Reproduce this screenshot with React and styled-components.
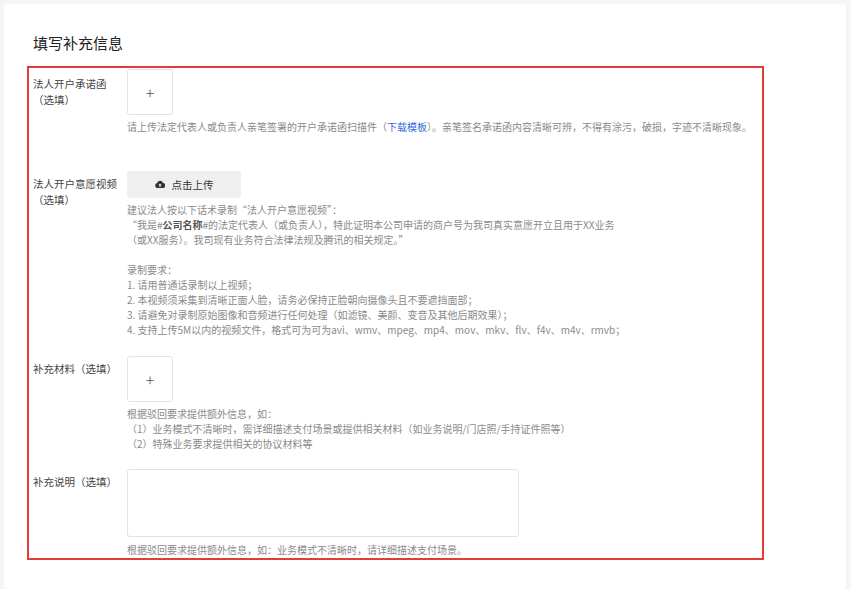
import styled, { createGlobalStyle } from 'styled-components';

const Global = createGlobalStyle`
  body { margin: 0; background: #f4f5f7; font-family: "Noto Sans CJK SC", "Liberation Sans", sans-serif; }
`;
const Card = styled.div`
  margin: 4px 5px 0 4px;
  height: 585px;
  background: #fff;
  border-radius: 4px;
  padding: 28px 0 0 23px;
  box-sizing: border-box;
`;
const Title = styled.h2`
  margin: 0 0 12px 6px;
  font-size: 15px;
  font-weight: 400;
  color: #222;
  line-height: 22px;
`;
const Frame = styled.div`
  width: 737px;
  height: 494px;
  box-sizing: border-box;
  border: 2px solid #e33b36;
  padding: 1px 0 0 4px;
`;
const Row = styled.div`
  display: flex;
  margin-bottom: ${(p) => p.gap || 0}px;
`;
const Label = styled.div`
  width: 94px;
  flex-shrink: 0;
  font-size: 10.5px;
  line-height: 16px;
  color: #444;
  white-space: nowrap;
  padding-top: ${(p) => p.top || 12}px;
`;
const Body = styled.div`
  flex: 1;
`;
const Box = styled.div`
  width: 44px;
  height: 44px;
  border: 1px solid #e3e3e3;
  border-radius: 3px;
  display: flex;
  align-items: center;
  justify-content: center;
  color: #555;
  font-size: 16px;
  font-weight: 300;
`;
const Btn = styled.div`
  width: 114px;
  height: 27px;
  background: #efefef;
  border-radius: 3px;
  display: flex;
  align-items: center;
  justify-content: center;
  gap: 7px;
  font-size: 10.5px;
  color: #333;
`;
const Hint = styled.div`
  margin-top: ${(p) => p.top || 6}px;
  font-size: 10px;
  line-height: 15px;
  color: #8a8a8a;
  white-space: nowrap;
  a { color: #2f6bd8; text-decoration: none; }
  b { color: #555; }
`;
const Area = styled.div`
  width: 390px;
  height: 66px;
  border: 1px solid #e3e3e3;
  border-radius: 3px;
`;

const Cloud = () => (
  <svg width="10" height="9" viewBox="0 0 20 16">
    <path d="M5 15a5 5 0 0 1-.6-9.9A6 6 0 0 1 16 5a5 5 0 0 1-.5 10z" fill="#333" />
    <path d="M10 6l-3.2 3.4H9V13h2V9.4h2.2z" fill="#fff" />
  </svg>
);

export default function App() {
  return (
    <>
      <Global />
      <Card>
        <Title>填写补充信息</Title>
        <Frame>
          <Row gap={37}>
            <Label top={7}>法人开户承诺函<br />（选填）</Label>
            <Body>
              <Box>+</Box>
              <Hint top={4}>
                请上传法定代表人或负责人亲笔签署的开户承诺函扫描件（<a href="#">下载模板</a>）。亲笔签名承诺函内容清晰可辨，不得有涂污，破损，字迹不清晰现象。
              </Hint>
            </Body>
          </Row>
          <Row gap={19}>
            <Label top={5}>法人开户意愿视频<br />（选填）</Label>
            <Body>
              <Btn><Cloud />点击上传</Btn>
              <Hint top={4}>
                建议法人按以下话术录制“法人开户意愿视频”：<br />
                “我是#<b>公司名称</b>#的法定代表人（或负责人），特此证明本公司申请的商户号为我司真实意愿开立且用于XX业务<br />
                （或XX服务）。我司现有业务符合法律法规及腾讯的相关规定。”<br />
                <br />
                录制要求：<br />
                1. 请用普通话录制以上视频；<br />
                2. 本视频须采集到清晰正面人脸，请务必保持正脸朝向摄像头且不要遮挡面部；<br />
                3. 请避免对录制原始图像和音频进行任何处理（如滤镜、美颜、变音及其他后期效果）；<br />
                4. 支持上传5M以内的视频文件，格式可为可为avi、wmv、mpeg、mp4、mov、mkv、flv、f4v、m4v、rmvb；
              </Hint>
            </Body>
          </Row>
          <Row gap={18}>
            <Label top={5}>补充材料（选填）</Label>
            <Body>
              <Box>+</Box>
              <Hint top={4}>
                根据驳回要求提供额外信息，如：<br />
                （1）业务模式不清晰时，需详细描述支付场景或提供相关材料（如业务说明/门店照/手持证件照等）<br />
                （2）特殊业务要求提供相关的协议材料等
              </Hint>
            </Body>
          </Row>
          <Row>
            <Label top={5}>补充说明（选填）</Label>
            <Body>
              <Area />
              <Hint top={5}>根据驳回要求提供额外信息，如：业务模式不清晰时，请详细描述支付场景。</Hint>
            </Body>
          </Row>
        </Frame>
      </Card>
    </>
  );
}
